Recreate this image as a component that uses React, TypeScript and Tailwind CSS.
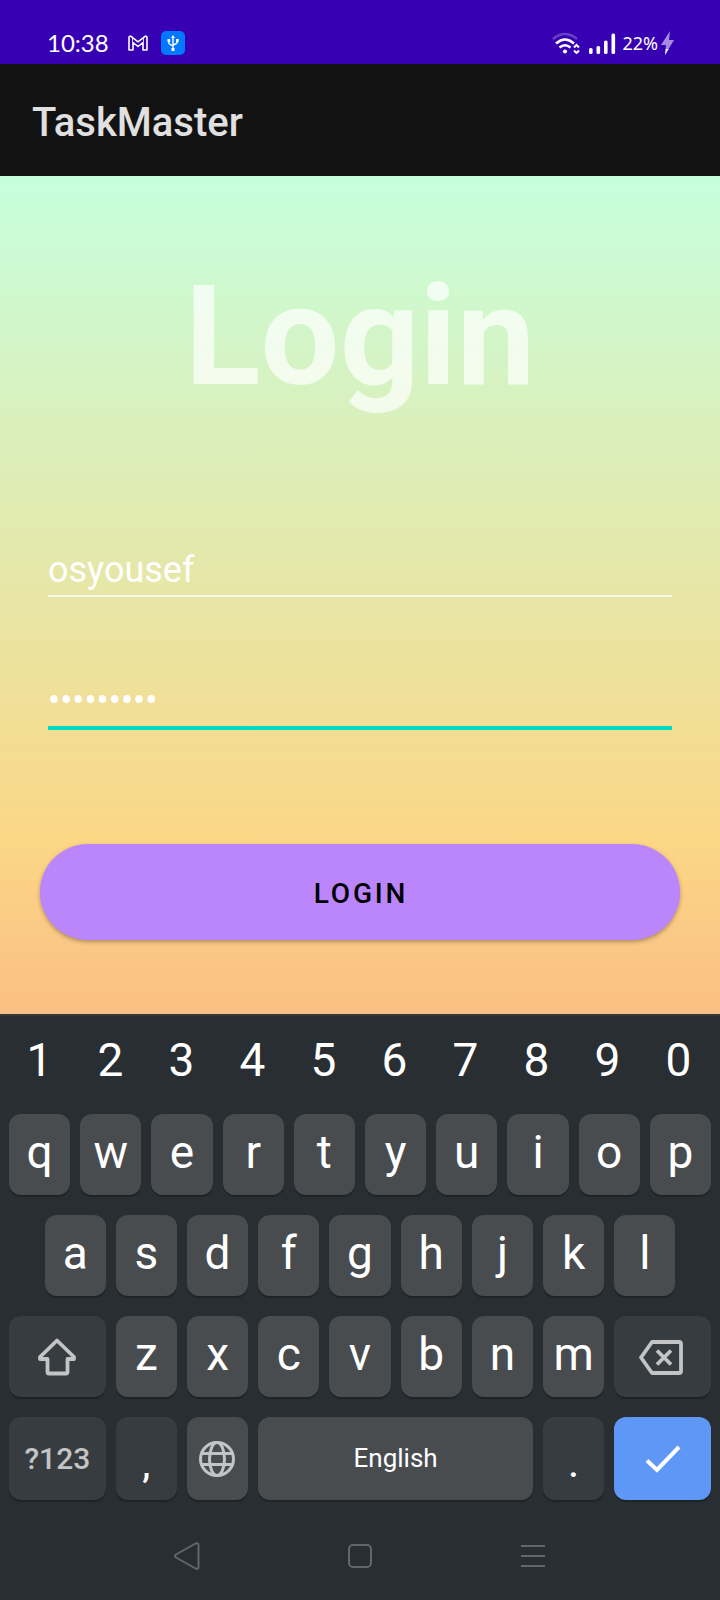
import type { ReactNode } from "react";

function StatusBar() {
  return (
    <header className="flex h-16 items-start justify-between bg-[#3700b3] px-[46px] pt-[31px] text-white">
      <div className="flex h-6 items-center">
        <span className="w-[82px] pl-px font-[Lato] text-[24px] leading-6">10:38</span>
        <svg className="h-4 w-5" viewBox="0 0 20 16" fill="none" stroke="currentColor" strokeWidth="1.6" strokeLinejoin="round" aria-label="Mail">
          <path d="M1 15V3Q1 .8 3 1.300L10 6.800L17 1.300Q19 .8 19 3V15H15V7.500L10 11.500L5 7.500V15Z" />
          <path d="M4.500 7V3M15.500 7V3" strokeWidth="0.800" />
        </svg>
        <span className="ml-[13px] flex size-6 items-center justify-center rounded-[5px] bg-[#0078ff]">
          <svg className="h-4 w-3" viewBox="0 0 12 16" fill="none" stroke="currentColor" strokeWidth="1.400" aria-label="USB">
            <path d="M6 2V14M1.800 5V7.500Q1.800 9 3.500 9.700L6 11M10.200 5V7Q10.200 8.500 8.500 9L6 10" />
            <path d="M6 0L8 3H4ZM.5 4H3.200V7H.5ZM9 4H11.700V7H9ZM4.500 13H7.500V16H4.500Z" fill="currentColor" stroke="none" />
          </svg>
        </span>
      </div>
      <div className="flex h-6 items-center">
        <svg className="h-[22px] w-7" viewBox="0 0 28 22" fill="none" stroke="currentColor" strokeWidth="2.500" aria-label="Wi-Fi">
          <path d="M1 7Q13 -3 25 7" opacity=".25" />
          <path d="M4 11.500Q13 3.500 22 11.500M7.500 15.500Q13 11 18.500 15.500" />
          <circle cx="13" cy="19.500" r="2.100" fill="currentColor" stroke="none" />
          <path d="M22 15.500L24.500 13L27 15.500M22 18.500L24.500 21L27 18.500" strokeWidth="2" />
        </svg>
        <svg className="ml-[9px] h-[21px] w-[27px]" viewBox="0 0 27 21" fill="currentColor" aria-label="Signal">
          <rect x="0" y="15" width="3.600" height="6" rx="1.500" />
          <rect x="7.500" y="13" width="3.600" height="8" rx="1.500" />
          <rect x="15" y="7.500" width="3.600" height="13.500" rx="1.500" />
          <rect x="22.500" y="0.500" width="3.600" height="20.500" rx="1.500" />
        </svg>
        <span className="ml-[6px] font-['Noto_Sans'] text-[18px] leading-6">22%</span>
        <svg className="ml-[3px] h-6 w-[13px]" viewBox="0 0 13 24" fill="#a68be0" aria-label="Charging">
          <path d="M9 0L0 14H5L4 24L13 9H8Z" />
          <path d="M4.800 18H7.500L4 24Z" fill="white" />
        </svg>
      </div>
    </header>
  );
}

function LoginForm() {
  return (
    <main className="flex flex-col bg-[linear-gradient(#c6ffdd_0px,#fbd786_664px,#f7797d_1328px)] px-10 pt-[78px] pb-[74px]">
      <h1 className="text-center text-[140px] leading-[164px] font-bold text-white/70">Login</h1>
      <form className="flex flex-col" onSubmit={(e) => e.preventDefault()}>
        <input
          aria-label="Username"
          defaultValue="osyousef"
          className="mx-2 mt-[127px] h-[52px] border-b-2 border-white/70 bg-transparent text-[36px] leading-[42px] text-white outline-none"
        />
        <input
          type="password"
          aria-label="Password"
          defaultValue="taskmaste"
          className="mx-2 mt-[78px] h-[55px] border-b-4 border-[#03dac5] bg-transparent text-[36px] leading-[42px] text-white outline-none"
        />
        <button className="mt-[114px] h-24 rounded-full bg-[#bb86fc] pt-1 pl-[2px] text-[28px] font-medium tracking-widest text-black shadow-[0_2px_4px_rgba(0,0,0,0.3)]">
          LOGIN
        </button>
      </form>
    </main>
  );
}

type KeyProps = { children: ReactNode; className?: string; label?: string };

const keyBase = "mx-[5px] flex items-center justify-center rounded-[12px] shadow-[0_2px_0_#1f2326]";

function LetterKey({ children }: KeyProps) {
  return <button className={`${keyBase} col-span-2 h-[81px] bg-[#484c4f] pb-1 text-[46px] text-white`}>{children}</button>;
}

function SpecialKey({ children, className = "", label }: KeyProps) {
  return (
    <button aria-label={label} className={`${keyBase} ${className}`}>
      {children}
    </button>
  );
}

const rowGrid = "grid grid-cols-20";

function Keyboard() {
  return (
    <section aria-label="Keyboard" className="flex flex-col gap-5 border-t-2 border-[#32373b] px-1">
      <div className="-mb-[10px] grid h-[88px] grid-cols-10 pr-[2px] text-[46px] text-white">
        {[..."1234567890"].map((n) => (
          <button key={n}>{n}</button>
        ))}
      </div>
      <div className={rowGrid}>
        {[..."qwertyuiop"].map((c) => (
          <LetterKey key={c}>{c}</LetterKey>
        ))}
      </div>
      <div className={rowGrid}>
        <span />
        {[..."asdfghjkl"].map((c) => (
          <LetterKey key={c}>{c}</LetterKey>
        ))}
      </div>
      <div className={rowGrid}>
        <SpecialKey label="Shift" className="col-span-3 bg-[#373c40] text-[#c2c4c6]">
          <svg className="h-[38px] w-10" viewBox="0 0 40 38" fill="none" stroke="currentColor" strokeWidth="3.800" strokeLinejoin="round">
            <path d="M20 2.500L37 19V21H30.500V34Q30.500 35.500 29 35.500H12Q10.500 35.500 10.500 34V21H3V19Z" />
          </svg>
        </SpecialKey>
        {[..."zxcvbnm"].map((c) => (
          <LetterKey key={c}>{c}</LetterKey>
        ))}
        <SpecialKey label="Backspace" className="col-span-3 bg-[#373c40] pr-[3px] text-[#c2c4c6]">
          <svg className="h-9 w-11" viewBox="0 0 44 36" fill="none" stroke="currentColor" strokeWidth="3.800" strokeLinejoin="round">
            <path d="M13 3H40Q42 3 42 5V32Q42 34 40 34H13L2 18.500Z" />
            <path d="M18 11.500L32 25.500M32 11.500L18 25.500" />
          </svg>
        </SpecialKey>
      </div>
      <div className={rowGrid}>
        <SpecialKey className="col-span-3 h-[83px] bg-[#373c40] text-[30px] font-medium text-[#c2c4c6]">?123</SpecialKey>
        <SpecialKey className="col-span-2 bg-[#373c40] pt-3 text-[36px] font-medium text-white">,</SpecialKey>
        <SpecialKey label="Change language" className="col-span-2 bg-[#484c4f] pr-[2px] text-[#c2c4c6]">
          <svg className="size-9" viewBox="0 0 36 36" fill="none" stroke="currentColor" strokeWidth="3">
            <circle cx="18" cy="18" r="16.500" />
            <ellipse cx="18" cy="18" rx="7.500" ry="16.500" />
            <path d="M3 12.500H33M3 23.500H33" />
          </svg>
        </SpecialKey>
        <SpecialKey className="col-span-8 bg-[#484c4f] text-[26px] text-white">English</SpecialKey>
        <SpecialKey className="col-span-2 bg-[#373c40] pt-3 text-[36px] font-medium text-white">.</SpecialKey>
        <SpecialKey label="Done" className="col-span-3 bg-[#5e97f6] text-white">
          <svg className="h-7 w-9" viewBox="0 0 36 28" fill="none" stroke="currentColor" strokeWidth="4">
            <path d="M2 15.500L12 25L34 2" />
          </svg>
        </SpecialKey>
      </div>
    </section>
  );
}

function NavigationBar() {
  return (
    <nav className="mx-auto grid w-[72%] grid-cols-3 place-items-center pt-[42px] pb-[30px] text-[#63676b]">
      <button aria-label="Back">
        <svg className="h-7 w-[26px]" viewBox="0 0 26 28" fill="none" stroke="currentColor" strokeWidth="2" strokeLinejoin="round">
          <path d="M2 12.500L21.500 1.500Q24.500 .5 24.500 3V25Q24.500 27.500 21.500 26.500L2 15.500Q0 14 2 12.500Z" />
        </svg>
      </button>
      <button aria-label="Home" className="size-6 rounded-[5px] border-2 border-current" />
      <button aria-label="Recent apps">
        <svg className="size-6" viewBox="0 0 24 24" fill="none" stroke="currentColor" strokeWidth="2">
          <path d="M0 2H24M0 12H24M0 22H24" />
        </svg>
      </button>
    </nav>
  );
}

export default function App() {
  return (
    <div className="flex min-h-screen flex-col bg-[#292e32] font-[Roboto,sans-serif]">
      <StatusBar />
      <div className="flex h-28 items-center bg-[#121212] px-8 pt-[6px]">
        <span className="text-[40px] font-medium text-[#e0e0e0]">TaskMaster</span>
      </div>
      <LoginForm />
      <Keyboard />
      <NavigationBar />
    </div>
  );
}
